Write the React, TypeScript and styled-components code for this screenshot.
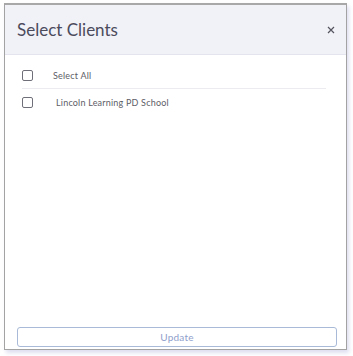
import React from "react";
import styled, { createGlobalStyle } from "styled-components";

const Global = createGlobalStyle`
  html, body { margin: 0; padding: 0; background: #ffffff; }
  body { width: 353px; height: 356px; overflow: hidden; font-family: Lato, "Noto Sans", sans-serif; }
`;

const Page = styled.div`
  width: 353px;
  height: 356px;
  padding: 3px 6px 6px 4px;
  box-sizing: border-box;
  display: flex;
`;

const Modal = styled.div`
  flex: 1;
  display: flex;
  flex-direction: column;
  background: #ffffff;
  border: 1px solid #a3a3a3;
  border-top: 2px solid #a8a8a8;
  box-shadow: 2px 3px 4px rgba(200, 200, 230, 0.6);
`;

const Header = styled.div`
  height: 49px;
  flex: none;
  display: flex;
  align-items: center;
  justify-content: space-between;
  padding: 0 10px 0 12px;
  background: #f1f1f8;
  border-bottom: 1px solid #e4e4ee;
`;

const Title = styled.h1`
  margin: 0;
  font-family: Lato, "Noto Sans", sans-serif;
  font-size: 17px;
  font-weight: 400;
  color: #4b4b5c;
`;

const Close = styled.button`
  border: none;
  background: none;
  padding: 0;
  width: 10px;
  height: 10px;
  display: flex;
  align-items: center;
  justify-content: center;
  cursor: pointer;
`;

const Body = styled.div`
  flex: 1;
  padding: 7px 20px 0 17px;
  display: flex;
  flex-direction: column;
`;

const Row = styled.label<{ $divider?: boolean }>`
  display: flex;
  align-items: center;
  height: 26px;
  border-bottom: ${(p) => (p.$divider ? "1px solid #ececf0" : "none")};
`;

const Box = styled.span<{ $gap: number }>`
  width: 9px;
  height: 9px;
  border: 1px solid #6f6f7a;
  border-radius: 2px;
  flex: none;
  margin-right: ${(p) => p.$gap}px;
`;

const Label = styled.span`
  font-family: Lato, "Noto Sans", sans-serif;
  font-size: 9px;
  letter-spacing: 0.2px;
  color: #5d5d66;
`;

const Footer = styled.div`
  padding: 0 9px 2px 12px;
`;

const UpdateButton = styled.button`
  width: 100%;
  height: 20px;
  border: 1px solid #a9b9d8;
  border-radius: 3px;
  background: #ffffff;
  color: #8fa0cc;
  font-family: Lato, "Noto Sans", sans-serif;
  font-size: 10px;
  letter-spacing: 0.2px;
  padding: 0;
`;

export default function App() {
  return (
    <>
      <Global />
      <Page>
        <Modal>
          <Header>
            <Title>Select Clients</Title>
            <Close aria-label="close">
              <svg width="8" height="8" viewBox="0 0 8 8">
                <path d="M1 1L7 7M7 1L1 7" stroke="#55555f" strokeWidth="1.2" />
              </svg>
            </Close>
          </Header>
          <Body>
            <Row $divider>
              <Box $gap={20} />
              <Label>Select All</Label>
            </Row>
            <Row>
              <Box $gap={23} />
              <Label>Lincoln Learning PD School</Label>
            </Row>
          </Body>
          <Footer>
            <UpdateButton>Update</UpdateButton>
          </Footer>
        </Modal>
      </Page>
    </>
  );
}
